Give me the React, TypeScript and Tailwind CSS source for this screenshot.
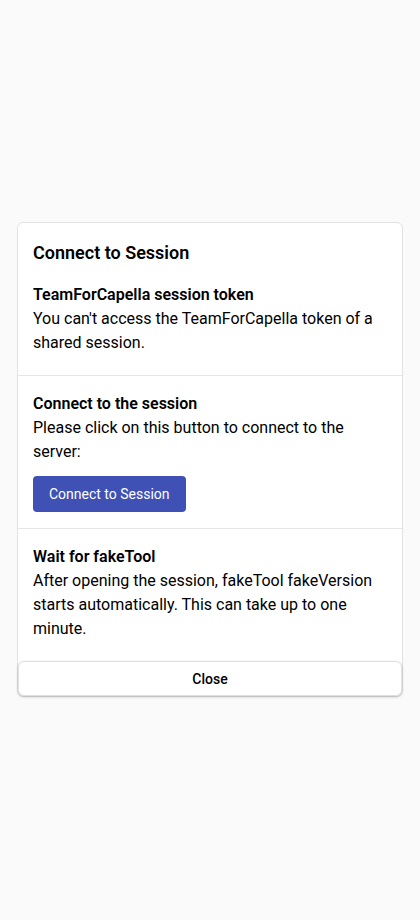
export default function App() {
  return (
    <div
      className="flex min-h-[920px] w-full items-start justify-center bg-[#fafafa] px-[17px] pt-[222px]"
      style={{ fontFamily: "Roboto, 'Noto Sans', sans-serif" }}
    >
      <div className="w-full rounded-md border border-[#e2e2e2] bg-white text-black">
        {/* Token */}
        <div className="border-b border-[#e5e5e5] px-[15px] pb-5 pt-4">
          <h2 className="mb-4 text-[18px] font-semibold leading-7">Connect to Session</h2>
          <h3 className="text-base font-semibold leading-6">TeamForCapella session token</h3>
          <p className="text-base leading-6">
            You can't access the TeamForCapella token of a shared session.
          </p>
        </div>

        {/* Connect */}
        <div className="border-b border-[#e5e5e5] px-[15px] pb-4 pt-4">
          <h3 className="text-base font-semibold leading-6">Connect to the session</h3>
          <p className="text-base leading-6">
            Please click on this button to connect to the server:
          </p>
          <button className="mt-3 h-9 rounded bg-[#3f51b5] px-4 text-sm font-normal text-white">
            Connect to Session
          </button>
        </div>

        {/* Wait */}
        <div className="px-[15px] pb-5 pt-4">
          <h3 className="text-base font-semibold leading-6">Wait for fakeTool</h3>
          <p className="text-base leading-6">
            After opening the session, fakeTool fakeVersion starts automatically. This can take up to one minute.
          </p>
        </div>

        <button className="h-[35px] w-full rounded-md border border-[#e0e0e0] bg-white text-sm font-medium text-black shadow-[0_1px_3px_rgba(0,0,0,0.2)]">
          Close
        </button>
      </div>
    </div>
  );
}
